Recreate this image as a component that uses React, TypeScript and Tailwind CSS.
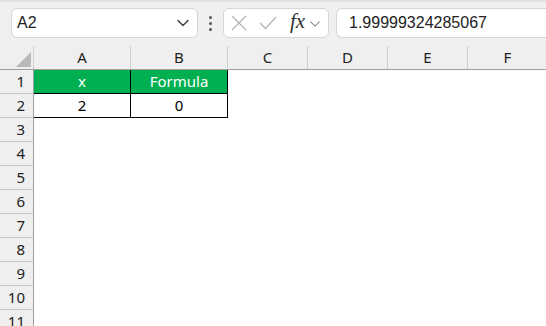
import React from "react";

const cols = [
  { l: "A", w: "w-[97px]" },
  { l: "B", w: "w-[97px]" },
  { l: "C", w: "w-[80px]" },
  { l: "D", w: "w-[80px]" },
  { l: "E", w: "w-[80px]" },
  { l: "F", w: "w-[80px]" },
];

const Chevron = ({ size = 14, color = "#444", sw = 1.4 }: { size?: number; color?: string; sw?: number }) => (
  <svg width={size} height={size} viewBox="0 0 14 14" fill="none">
    <path d="M2 4.5 L7 9.5 L12 4.5" stroke={color} strokeWidth={sw} strokeLinecap="round" strokeLinejoin="round" />
  </svg>
);

export default function App() {
  const rows = [1, 2, 3, 4, 5, 6, 7, 8, 9, 10, 11];
  return (
    <div className="w-[546px] h-[326px] overflow-hidden bg-white" style={{ fontFamily: '"Noto Sans", "Open Sans", sans-serif' }}>
      {/* toolbar */}
      <div className="h-[46px] bg-[#f0f0f0] border-t-2 border-[#e2e2e2] flex items-start pt-[6px]">
        <div className="ml-[11px] w-[187px] h-[30px] bg-white border border-[#d6d6d6] rounded-[6px] flex items-center pl-[5px] pr-[7px]">
          <span className="text-[16px] text-[#222] flex-1 leading-none" style={{ fontFamily: '"Liberation Sans", Arial, sans-serif' }}>A2</span>
          <Chevron size={14} color="#444" sw={1.5} />
        </div>
        <div className="w-[25px] h-[30px] flex flex-col items-center justify-center gap-[3px]">
          <div className="w-[3px] h-[3px] bg-[#555] rounded-full" />
          <div className="w-[3px] h-[3px] bg-[#555] rounded-full" />
          <div className="w-[3px] h-[3px] bg-[#555] rounded-full" />
        </div>
        <div className="w-[106px] h-[30px] bg-white border border-[#d6d6d6] rounded-[6px] flex items-center pl-[6px]">
          <svg width="18" height="18" viewBox="0 0 18 18" fill="none">
            <path d="M2 2 L16 16 M16 2 L2 16" stroke="#b5b5b5" strokeWidth="1.3" />
          </svg>
          <svg width="20" height="18" viewBox="0 0 20 18" className="ml-[10px]" fill="none">
            <path d="M2 9 L7.5 14.5 L18 3" stroke="#b5b5b5" strokeWidth="1.3" />
          </svg>
          <span className="ml-[12px] text-[21px] italic text-[#333] leading-none -mt-[3px]" style={{ fontFamily: '"Liberation Serif", "Times New Roman", serif' }}>fx</span>
          <span className="ml-[4px] mt-[2px]"><Chevron size={12} color="#888" sw={1.2} /></span>
        </div>
        <div className="ml-[7px] flex-1 h-[30px] bg-white border border-r-0 border-[#d6d6d6] rounded-l-[6px] flex items-center pl-[12px]">
          <span className="text-[16px] text-[#222] leading-none" style={{ fontFamily: '"Liberation Sans", Arial, sans-serif' }}>1.99999324285067</span>
        </div>
      </div>
      {/* column header */}
      <div className="flex h-[24px] bg-[#efefef] border-b border-[#9e9e9e]">
        <div className="w-[34px] shrink-0 border-r border-[#cfcfcf] relative">
          <div className="absolute right-[2px] bottom-[2px] w-0 h-0 border-l-[15px] border-l-transparent border-b-[15px] border-b-[#b9b9b9]" />
        </div>
        {cols.map((c) => (
          <div key={c.l} className={`${c.w} shrink-0 border-r border-[#cfcfcf] flex items-center justify-center text-[15px] text-[#222]`}>
            {c.l}
          </div>
        ))}
      </div>
      {/* rows */}
      {rows.map((r) => (
        <div key={r} className="flex h-[24px]">
          <div className="w-[34px] shrink-0 bg-[#efefef] border-r border-b border-r-[#9e9e9e] border-b-[#c4c4c4] flex items-center justify-end pr-[8px] text-[15px] text-[#222]">
            {r}
          </div>
          {r === 1 && (
            <>
              <div className="w-[97px] shrink-0 bg-[#00b050] border-r border-b border-black flex items-center justify-center text-[15px] text-white">x</div>
              <div className="w-[97px] shrink-0 bg-[#00b050] border-r border-b border-black flex items-center justify-center text-[15px] text-white">Formula</div>
            </>
          )}
          {r === 2 && (
            <>
              <div className="w-[97px] shrink-0 border-r border-b border-black flex items-center justify-center text-[15px] text-black">2</div>
              <div className="w-[97px] shrink-0 border-r border-b border-black flex items-center justify-center text-[15px] text-black">0</div>
            </>
          )}
        </div>
      ))}
    </div>
  );
}
